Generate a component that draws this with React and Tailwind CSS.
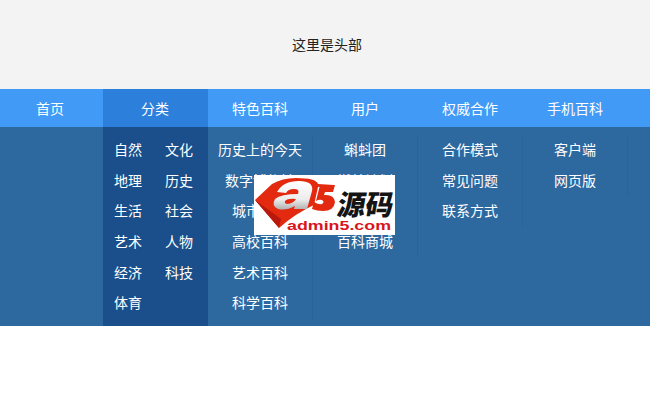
const menus = [
  { title: "首页", width: "w-[103px]", rows: [] },
  {
    title: "分类",
    width: "w-[105px]",
    active: true,
    rows: ["自然", "文化", "地理", "历史", "生活", "社会", "艺术", "人物", "经济", "科技", "体育"],
  },
  {
    title: "特色百科",
    width: "w-[105px]",
    rows: ["历史上的今天", "数字博物馆", "城市百科", "高校百科", "艺术百科", "科学百科"],
  },
  {
    title: "用户",
    width: "w-[105px]",
    rows: ["蝌蚪团", "燃梦计划", "百科任务", "百科商城"],
  },
  {
    title: "权威合作",
    width: "w-[105px]",
    rows: ["合作模式", "常见问题", "联系方式"],
  },
  {
    title: "手机百科",
    width: "w-[105px]",
    rows: ["客户端", "网页版"],
  },
];

const Logo = () => (
  <svg viewBox="0 0 141 60" className="block h-[60px] w-[141px]">
    <defs>
      <linearGradient id="silver" x1="0" y1="0" x2="0" y2="1">
        <stop offset="0" stopColor="#ffffff" />
        <stop offset="0.65" stopColor="#ececec" />
        <stop offset="1" stopColor="#b0b0b0" />
      </linearGradient>
    </defs>
    <rect width="141" height="60" fill="#fff" />
    <path d="M1 25 L18 9 Q28 3 42 3 Q62 3 64 9 L80 10 L64 12 L60 30 Q42 38 25 53 Z" fill="#e3290f" />
    <path d="M1 25 L27 44 L25 53 Z" fill="#b9190c" />
    <path
      fillRule="evenodd"
      d="M23 17 Q29 6 45 6 Q60 6 58 16 L53 34 L40 34 L41 31 Q32 36 24 34 Q17 31 21 24 Q27 19 44 19 Q46 14 40 14 Q34 14 32 18 Z M31 26 Q30 29 34 29 Q40 28 42 24 Q34 23 31 26 Z"
      fill="url(#silver)"
    />
    <path d="M66 10 L81 10 L79 17 L71 17 L70 20 Q80 19 81 27 Q80 36 69 36 Q63 36 58 34 L60 27 Q65 30 68 29 Q71 27 68 25 Q65 24 62 26 Z" fill="#e3290f" />
    <text
      x="82"
      y="40"
      transform="skewX(-10) translate(7 0)"
      fontSize="28"
      fontWeight="900"
      fill="#141414"
      fontFamily='"Noto Sans CJK SC", sans-serif'
      textLength="56"
      lengthAdjust="spacingAndGlyphs"
    >
      源码
    </text>
    <text
      x="33"
      y="55"
      fontSize="13"
      fontWeight="700"
      fill="#d9141b"
      fontFamily='"Liberation Sans", sans-serif'
      textLength="104"
      lengthAdjust="spacingAndGlyphs"
    >
      admin5.com
    </text>
  </svg>
);

const App = () => {
  return (
    <div className="relative h-[410px] w-[650px] overflow-hidden bg-white font-['Noto_Sans_CJK_SC',sans-serif] text-sm">
      <div className="flex h-[89px] items-center justify-center bg-[#f3f3f3] pb-[2px] pl-[4px] text-[#222]">
        这里是头部
      </div>

      {/* Nav */}
      <div className="flex h-[38px] bg-[#409af6] text-white">
        {menus.map((m, i) => (
          <div
            key={m.title}
            className={`flex items-center justify-center ${m.width} ${m.active ? "bg-[#2c80dc]" : ""} ${i === 0 ? "pr-[3px]" : "pr-[1px]"}`}
          >
            {m.title}
          </div>
        ))}
      </div>

      {/* Dropdown */}
      <div className="flex h-[199px] bg-[#2d689f] text-white">
        {menus.map((m, i) => (
          <div key={m.title} className={`${m.width} ${m.active ? "bg-[#1a4f8b]" : ""}`}>
            {m.active ? (
              <div className="mt-[8px] grid grid-cols-[51px_1fr] pl-[11px]">
                {m.rows.map((r) => (
                  <div key={r} className="h-[30.7px] leading-[29px]">{r}</div>
                ))}
              </div>
            ) : (
              <div className={`mt-[8px] text-center ${i > 0 ? "border-r border-[#2a629a]" : ""}`}>
                {m.rows.map((r) => (
                  <div key={r} className="h-[30.7px] leading-[29px]">{r}</div>
                ))}
              </div>
            )}
          </div>
        ))}
      </div>

      <div className="absolute left-[254px] top-[175px]">
        <Logo />
      </div>
    </div>
  );
};

export default App;
